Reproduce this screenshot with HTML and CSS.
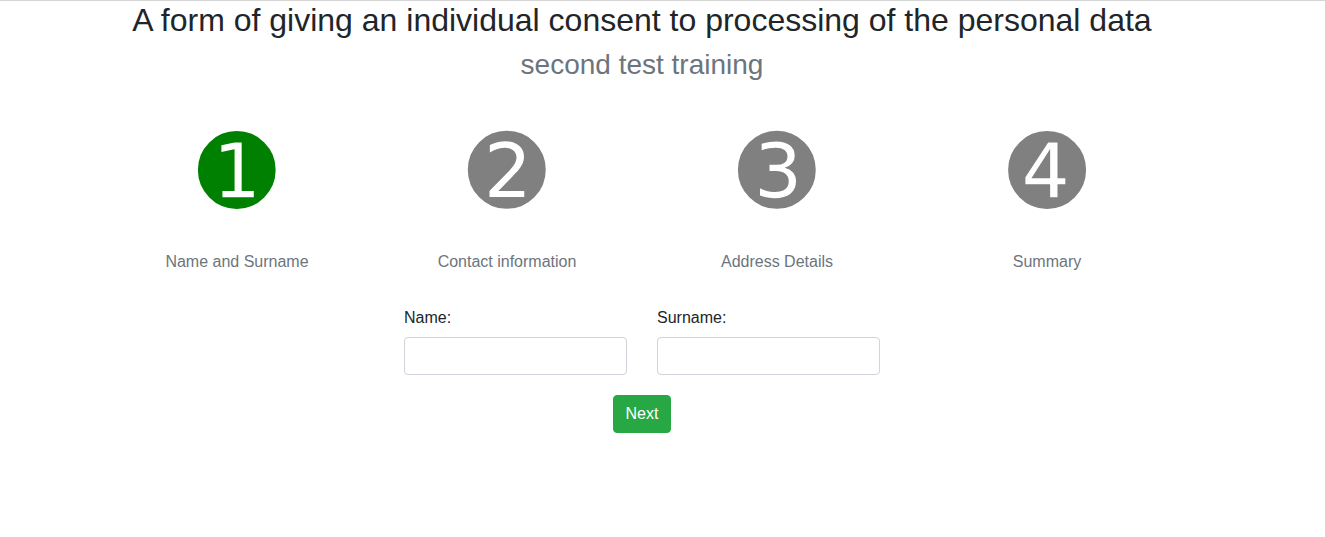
FILE: index.html
```html
<!DOCTYPE html>
<html lang="en">
<head>
<meta charset="utf-8">
<title>Consent form</title>
<link rel="stylesheet" href="styles.css">
</head>
<body>
<div class="page">
  <h2 class="title">A form of giving an individual consent to processing of the personal data</h2>
  <h3 class="subtitle">second test training</h3>
  <div class="steps">
    <div class="step">
      <span class="step-icon active">&#x278A;</span>
      <span class="step-label">Name and Surname</span>
    </div>
    <div class="step">
      <span class="step-icon">&#x278B;</span>
      <span class="step-label">Contact information</span>
    </div>
    <div class="step">
      <span class="step-icon">&#x278C;</span>
      <span class="step-label">Address Details</span>
    </div>
    <div class="step">
      <span class="step-icon">&#x278D;</span>
      <span class="step-label">Summary</span>
    </div>
  </div>
  <form class="form">
    <div class="fields">
      <div class="field">
        <label for="name">Name:</label>
        <input id="name" type="text">
      </div>
      <div class="field">
        <label for="surname">Surname:</label>
        <input id="surname" type="text">
      </div>
    </div>
    <button type="button" class="btn-next">Next</button>
  </form>
</div>
</body>
</html>
```
FILE: styles.css
```css
html, body {
  margin: 0;
  padding: 0;
  background: #fff;
}
body {
  border-top: 1px solid #d4d4d4;
  font-family: "Liberation Sans", Arial, Helvetica, sans-serif;
  font-size: 16px;
  line-height: 1.5;
  color: #212529;
}
.page {
  width: 1284px;
  display: flex;
  flex-direction: column;
  align-items: center;
}
.title {
  margin: 0;
  font-size: 32px;
  font-weight: 400;
  line-height: 1.2;
  color: #212529;
}
.subtitle {
  margin: 9px 0 0;
  font-size: 28px;
  font-weight: 400;
  line-height: 1.2;
  color: #6c757d;
}
.steps {
  width: 1080px;
  display: grid;
  grid-template-columns: repeat(4, 1fr);
  margin-top: 27px;
}
.step {
  display: flex;
  flex-direction: column;
  align-items: center;
}
.step-icon {
  font-family: "DejaVu Sans", sans-serif;
  font-size: 94px;
  line-height: 126px;
  color: #808080;
}
.step-icon.active {
  color: #008000;
}
.step-label {
  margin-top: 15px;
  color: #6c757d;
  line-height: 24px;
}
.form {
  margin-top: 32px;
  display: flex;
  flex-direction: column;
  align-items: center;
}
.fields {
  display: flex;
  gap: 30px;
}
.field {
  display: flex;
  flex-direction: column;
  width: 223px;
}
.field label {
  line-height: 24px;
  margin-bottom: 7px;
}
.field input {
  box-sizing: border-box;
  height: 38px;
  width: 100%;
  border: 1px solid #ced4da;
  border-radius: 4px;
  padding: 6px 12px;
  font-size: 16px;
  font-family: inherit;
}
.btn-next {
  margin-top: 20px;
  height: 38px;
  padding: 6px 12px;
  border: 1px solid #28a745;
  border-radius: 4px;
  background: #28a745;
  color: #fff;
  font-family: inherit;
  font-size: 16px;
  line-height: 24px;
}
```
